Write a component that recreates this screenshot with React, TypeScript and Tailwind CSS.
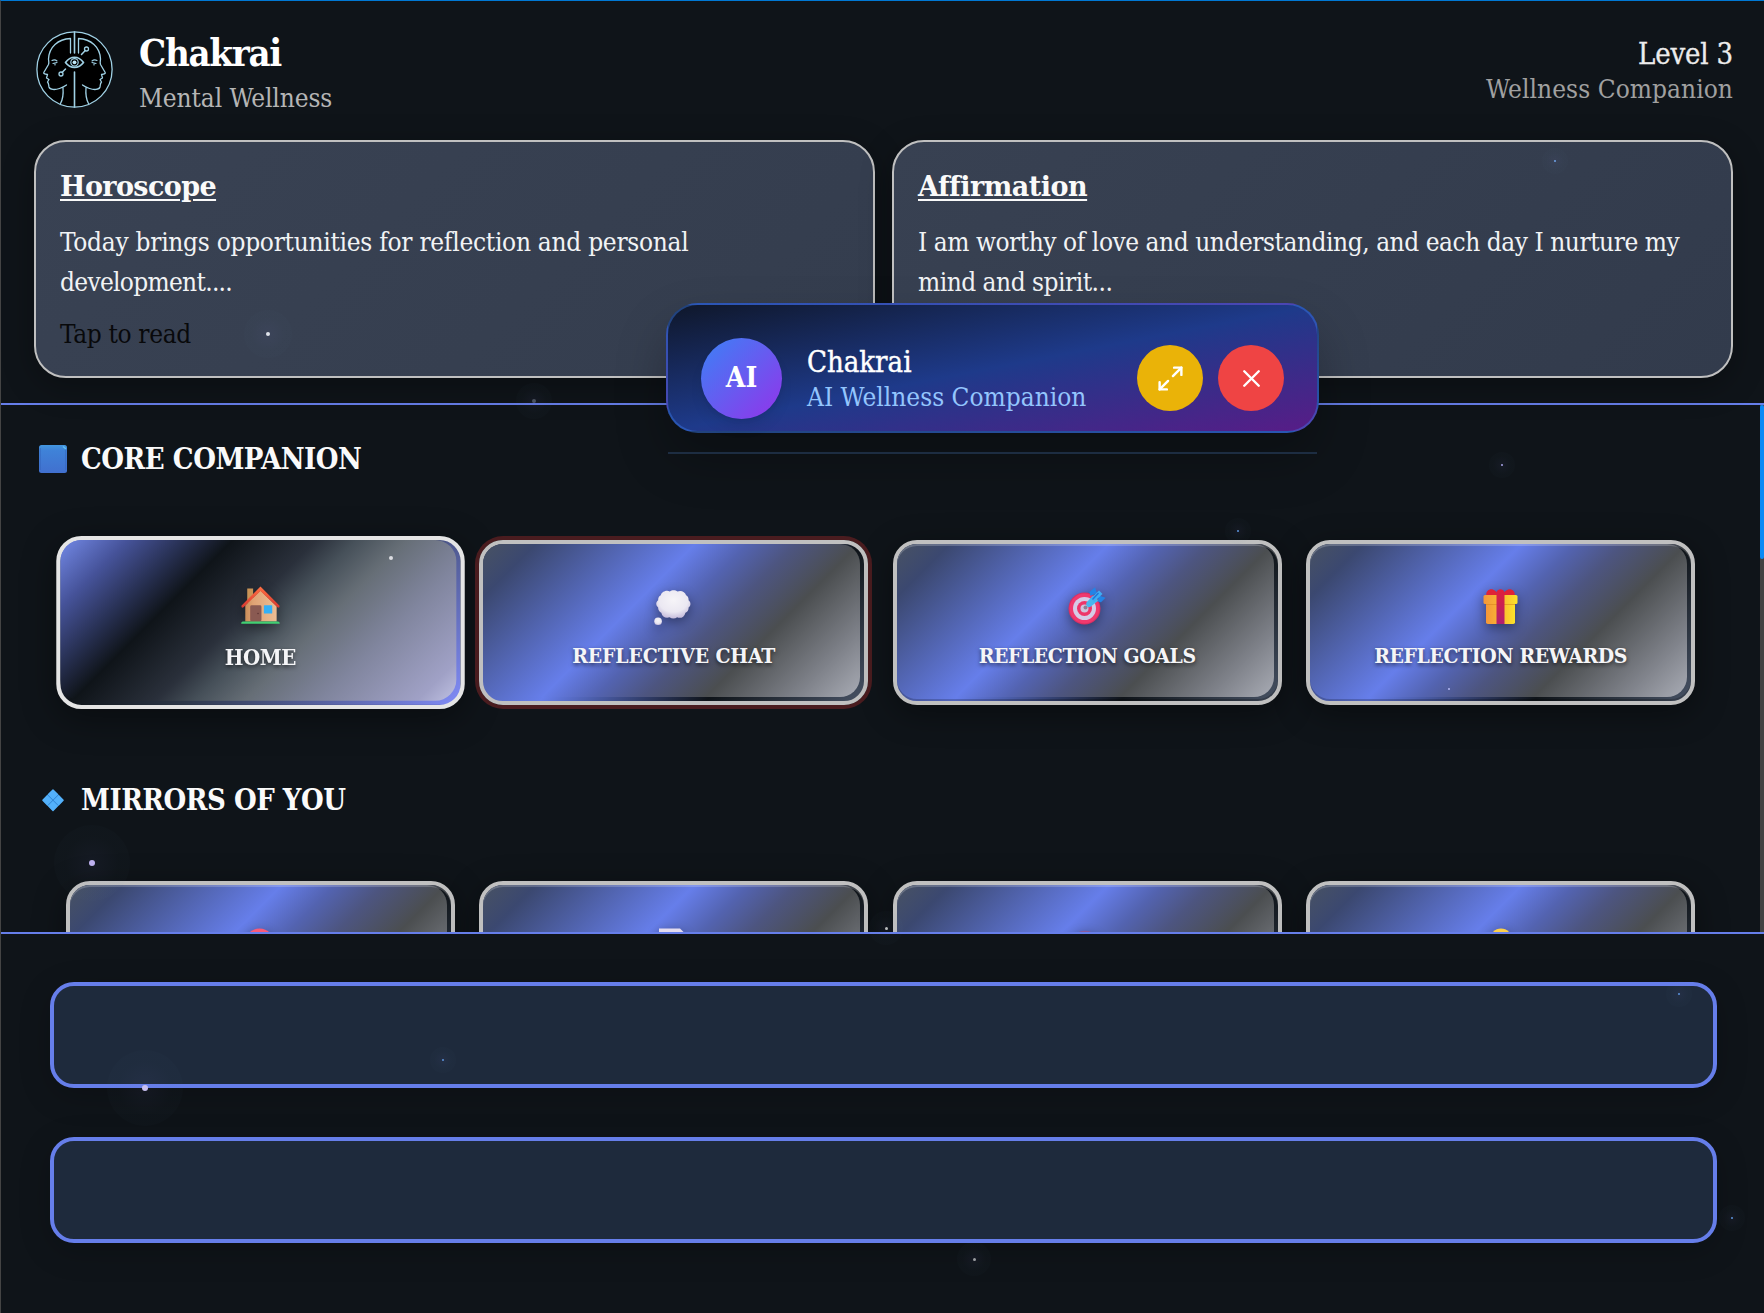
import type { ReactNode } from "react";
import { Maximize2, X } from "lucide-react";

function HeadsLogo() {
  return (
    <svg className="size-[77px] shrink-0" viewBox="0 0 77 77" fill="none" stroke="#9fd0e4" strokeWidth="1.3" strokeLinecap="round" strokeLinejoin="round">
      <circle cx="38.5" cy="38.5" r="37.6" fill="#000" />
      <path d="M38.5 1v21M38.5 41v35" strokeWidth="1.6" />
      <path d="M34.5 22V7.5C22 8 13 16 12.500 28c0 2 .8 3.500 0 5.500L7.800 41.500c-.4 1 .4 1.500 3.700 2l-1 3.500 2.500 1.500-1.500 2.500c1.500 1.500 1 3 1.500 5 1 3 6 3 10.500 1.500 3-1 5-2 7-3.500M27 57c.5 6 .5 10-2.500 15.500" />
      <path d="M42.500 22V7.500C55 8 64 16 64.500 28c0 2-.8 3.500 0 5.500l4.700 8c.4 1-.4 1.500-3.700 2l1 3.500-2.500 1.500 1.500 2.500c-1.500 1.500-1 3-1.500 5-1 3-6 3-10.500 1.500-3-1-5-2-7-3.500M50 57c-.5 6-.5 10 2.500 15.500" />
      <path d="M16 29.500c2-1 3.500-.8 5 .5M17 32.500l4-1M19 32v2M61 29.500c-2-1-3.500-.8-5 .5M60 32.500l-4-1M58 32v2" strokeWidth="1.100" />
      <path d="M29.500 31.500c5-7 13-7 18 0-5 6.500-13 6.500-18 0Z" fill="#000" strokeWidth="1.700" />
      <circle cx="38.500" cy="31.300" r="3.700" strokeWidth="1.200" />
      <circle cx="38.500" cy="31.300" r="1.900" fill="#bfe8f8" stroke="none" />
      <path d="m45.500 23.500 3.800-4M29.500 38l-3.500 3.500" strokeWidth="1.500" />
      <circle cx="50.500" cy="18" r="2" />
      <circle cx="25" cy="43" r="2" />
    </svg>
  );
}

function House() {
  return (
    <svg className="size-[42px]" viewBox="-2 -1.5 45 45">
      <defs>
        <linearGradient id="wall" x1="0" x2="1"><stop offset="0" stopColor="#c98d58" /><stop offset=".25" stopColor="#dfa274" /><stop offset="1" stopColor="#ecbd94" /></linearGradient>
        <linearGradient id="roof" x1="0" x2="0" y1="0" y2="1"><stop offset="0" stopColor="#ff7043" /><stop offset="1" stopColor="#d8372f" /></linearGradient>
      </defs>
      <path d="M7.500 3h6v15h-6z" fill="#c99457" />
      <path d="M5.500 20 21 5l16.500 16v15.500h-32z" fill="url(#wall)" />
      <path d="M1.500 20.500 21 1l19.500 19.500c0 2-1 2.500-2.200 1.500L21 5.500 3.700 22c-1.200 1-2.200.5-2.200-1.500Z" fill="url(#roof)" />
      <rect x="10.500" y="20" width="11.500" height="16.500" rx="1.500" fill="#8a5a52" />
      <circle cx="18.500" cy="28.500" r=".8" fill="#5d3532" />
      <rect x="24.500" y="20" width="8.500" height="8.500" rx=".6" fill="#34b0f7" />
      <path d="M3 36.500h36c1.500.5 2 1.500 1.500 2.500h-39c-.5-1 0-2 1.500-2.500Z" fill="#41cf73" />
    </svg>
  );
}

function Thought() {
  return (
    <svg className="size-[42px]" viewBox="1.600 .5 40.500 40.500">
      <defs>
        <radialGradient id="cloud" cx=".5" cy=".35" r=".65"><stop offset="0" stopColor="#f6f4f8" /><stop offset=".65" stopColor="#ebe8f2" /><stop offset="1" stopColor="#c6bcdc" /></radialGradient>
      </defs>
      <g fill="url(#cloud)">
        <path d="M13 5.500c1.800-.6 3.500-.4 4.800.3 2-1.600 5.400-1.600 7.400 0 3.200-1.500 7.400 0 8.300 3.700 1.800 1 2.600 2.800 2.400 4.800 2.400 1.900 2.400 5 0 6.900.2 2.400-1 4.300-3 5-1 4.300-4.800 6-8 4.500-2 1.500-5.300 1.500-7.300 0-3.700 1.400-7.200-.6-8-4.500-2-.8-3.200-2.800-3-5-2.500-2-2.500-5 0-6.900-.2-2.200.7-4 2.500-4.900.4-2 1.900-3.400 3.900-3.900Z" />
        <circle cx="6.500" cy="34.500" r="3.700" />
      </g>
    </svg>
  );
}

function Target() {
  return (
    <svg className="size-[42px]" viewBox="0 0 42 42">
      <circle cx="18.500" cy="22.500" r="16" fill="#d92f63" />
      <circle cx="18.500" cy="22.500" r="15" fill="#f0396e" />
      <circle cx="18.500" cy="22.500" r="11.500" fill="#d6cbe6" />
      <circle cx="18.500" cy="22.500" r="7.500" fill="#ee3569" />
      <circle cx="18.500" cy="22.500" r="4" fill="#cfc3dd" />
      <circle cx="19.500" cy="21.500" r="2" fill="#8c7f95" />
      <path d="M20.500 16.500 27 9.500l5.500 5-8 6.300c-3 1.500-5.200-1.500-4-4.300Z" fill="#48b6ef" />
      <path d="m24.500 10-1-4L29 1.300l1.800 5.700zM31.500 15.500l3.500.7 4.500-4.500-6.500-2.200z" fill="#2383e6" />
      <path d="M24.500 12.500 33 4.500l3.500 3.500-8.500 8z" fill="#3fadf4" />
      <path d="m26.500 13.500 6-6.500" stroke="#1e74db" strokeWidth="1.400" />
    </svg>
  );
}

function Gift() {
  return (
    <svg className="size-[42px]" viewBox=".5 1 42 42">
      <defs>
        <linearGradient id="box" x1="0" x2="1"><stop offset="0" stopColor="#f5963a" /><stop offset=".5" stopColor="#f8b832" /><stop offset="1" stopColor="#fde32a" /></linearGradient>
        <linearGradient id="ribbon" x1="0" x2="0" y1="0" y2="1"><stop offset="0" stopColor="#e0203a" /><stop offset="1" stopColor="#b02070" /></linearGradient>
      </defs>
      <path d="M7 11c-1.500-5 4-9 9-5l3 3h4l3-3c5-4 10.500 0 9 5Z" fill="#df2237" />
      <rect x="6.500" y="16" width="29" height="23" rx="1.800" fill="url(#box)" />
      <rect x="4" y="10" width="34" height="9" rx="1.500" fill="url(#box)" />
      <path d="M6.500 19h29v1h-29z" fill="#d98720" opacity=".6" />
      <path d="M17 39V8c0-5 8-5 8 0v31Z" fill="url(#ribbon)" />
    </svg>
  );
}

function Brain() {
  return <svg className="size-[42px]" viewBox="0 0 42 42"><ellipse cx="20.500" cy="17" rx="15" ry="15.500" fill="#fb5a78" /></svg>;
}
function Note() {
  return <svg className="size-[42px]" viewBox="0 0 42 42"><path d="M6 1.500h21l4 4v34H6z" fill="#e4dcf0" /></svg>;
}
function Mask() {
  return <svg className="size-[42px]" viewBox="0 0 42 42"><circle cx="19" cy="20" r="16.300" fill="#8a5a98" /></svg>;
}
function Bulb() {
  return <svg className="size-[42px]" viewBox="0 0 42 42"><circle cx="21" cy="12.500" r="11" fill="#fdd04a" /></svg>;
}

function BlueSquare() {
  return (
    <svg className="size-[28px]" viewBox="0 0 28 28">
      <defs><linearGradient id="sq" x1="0" x2="0" y1="0" y2="1"><stop offset="0" stopColor="#4397e0" /><stop offset=".2" stopColor="#3f82d8" /><stop offset="1" stopColor="#4170cf" /></linearGradient></defs>
      <rect width="28" height="28" rx="2.500" fill="url(#sq)" />
      <path d="M1.200 3v22M26.800 3v22" stroke="#315fb5" strokeWidth="1" opacity=".6" />
      <path d="M24 1.500 27 4" stroke="#63c0f2" strokeWidth="1.500" />
    </svg>
  );
}

function BlueDiamonds() {
  return (
    <svg className="size-[28px]" viewBox="0 0 28 28" fill="#53b1fb" stroke="#53b1fb" strokeWidth="1.400" strokeLinejoin="round">
      <path d="m14 3.900 4.600 4.700-4.600 4.700-4.600-4.700zM8.500 9.500l4.600 4.700-4.600 4.700-4.600-4.700zM19.500 9.500l4.600 4.700-4.600 4.700-4.600-4.700zM14 15.100l4.600 4.700-4.600 4.700-4.600-4.700z" />
      <path d="m8.800 9 10.400 10.500M19.200 9 8.800 19.500" stroke="#2f83d2" strokeWidth="1" fill="none" />
    </svg>
  );
}

type Tile = { label: string; spacing: string; icon: ReactNode };

const coreTiles: Tile[] = [
  { label: "REFLECTIVE CHAT", spacing: "tracking-[-0.15px]", icon: <Thought /> },
  { label: "REFLECTION GOALS", spacing: "tracking-[-0.42px]", icon: <Target /> },
  { label: "REFLECTION REWARDS", spacing: "tracking-[-0.38px]", icon: <Gift /> },
];
const mirrorTiles: Tile[] = [
  { label: "", spacing: "", icon: <Brain /> },
  { label: "", spacing: "", icon: <Note /> },
  { label: "", spacing: "", icon: <Mask /> },
  { label: "", spacing: "", icon: <Bulb /> },
];

const labelCls = "relative mt-[13px] text-[21px] leading-[30px] font-bold whitespace-nowrap text-[#f5f5f7] [text-shadow:0_2px_4px_rgba(0,0,0,0.6)]";

function TileButton({ tile, ringed }: { tile: Tile; ringed?: boolean }) {
  return (
    <button
      className={
        "relative flex h-[165px] flex-col items-center rounded-[24px] border-4 border-[#c0c0c0] bg-[linear-gradient(135deg,#2d3748_0%,#667eea_40%,#0f1419_70%,#4a5568_100%)] bg-origin-border pt-[42px] " +
        (ringed ? "shadow-[0_0_0_4px_#4a1c1f]" : "shadow-[0_8px_32px_rgba(0,0,0,0.4)]")
      }
    >
      <span className="absolute top-0 right-1 bottom-1 left-0 rounded-[20px] bg-[linear-gradient(135deg,#485263_0%,#3b4870_10%,#667eea_40%,#5363b0_50%,#4d5580_59%,#4b4e50_71%,#80838b_88%,#a9acb5_100%)]" />
      {!ringed && <span className="absolute inset-0 rounded-[20px] shadow-[inset_0_2px_0_rgba(255,255,255,0.2),inset_0_-2px_0_rgba(0,0,0,0.2)]" />}
      <span className="relative h-[42px]">
        <span className="block drop-shadow-[0_4px_6px_rgba(0,0,0,0.4)]">{tile.icon}</span>
      </span>
      <span className={labelCls + " " + tile.spacing}>{tile.label}</span>
    </button>
  );
}

function HomeButton() {
  return (
    <button className="relative flex h-[165px] scale-105 flex-col items-center rounded-[24px] border-4 border-[#e5e5e5] bg-[linear-gradient(135deg,#667eea_0%,#0f1419_30%,#2d3748_50%,#818cf8_100%)] pt-[42px] shadow-[0_8px_32px_rgba(0,0,0,0.4)]">
      <span className="absolute top-0 right-1 bottom-1 left-0 rounded-[20px] bg-[linear-gradient(135deg,#7389e6_0%,#46539a_12%,#0f1419_31%,#2a303b_46%,#465059_53%,#666e76_62%,#7f849c_75%,#a0a1c6_93%,#bfc1e2_100%)]" />
      <span className="relative h-[42px] drop-shadow-[0_4px_6px_rgba(0,0,0,0.4)]"><House /></span>
      <span className={labelCls + " tracking-[-0.5px]"}>HOME</span>
    </button>
  );
}

const stars = [
  { x: 268, y: 334, d: 4, h: 48, c: "#dfe3ea" },
  { x: 1555, y: 161, d: 2, h: 26, c: "#6fa5e8" },
  { x: 534, y: 401, d: 4, h: 36, c: "#4a5260" },
  { x: 1502, y: 465, d: 2, h: 26, c: "#a9a5e8" },
  { x: 1238, y: 531, d: 2, h: 26, c: "#5b95dc" },
  { x: 391, y: 558, d: 4, h: 0, c: "#dcdde2" },
  { x: 1449, y: 689, d: 2, h: 0, c: "#b4b8f5" },
  { x: 92, y: 863, d: 6, h: 76, c: "#bdb0ee" },
  { x: 886, y: 928, d: 3, h: 34, c: "#b9bcbe" },
  { x: 145, y: 1088, d: 6, h: 76, c: "#c9c0f0" },
  { x: 443, y: 1060, d: 2, h: 26, c: "#5b95dc" },
  { x: 1679, y: 994, d: 2, h: 26, c: "#5b95dc" },
  { x: 1732, y: 1218, d: 2, h: 26, c: "#5b95dc" },
  { x: 974, y: 1259, d: 3, h: 34, c: "#9a9da0" },
];

const cardTitle = "pt-px text-[27px] leading-[39px] font-bold text-[#fafafa] underline decoration-2 underline-offset-[3px] font-['DejaVu_Serif',serif] font-stretch-normal";

export default function App() {
  return (
    <div className="relative flex h-[1313px] w-[1764px] flex-col overflow-hidden border-t border-l border-t-[#0078d4] border-l-[#444] bg-[#0f1419] font-['DejaVu_Serif_Condensed','DejaVu_Serif',serif] font-stretch-condensed">
      <header className="h-[404px] shrink-0 border-b-2 border-[#667eea] pr-[31px] pl-[33px]">
        <div className="flex h-[139px] justify-between">
          <div className="flex pt-[28px]">
            <div className="pt-[2px] pl-[2px]"><HeadsLogo /></div>
            <div className="pl-[26px]">
              <h1 className="text-[38px] leading-[48px] font-bold tracking-[-1.3px] text-white">Chakrai</h1>
              <p className="mt-[3px] text-[26px] leading-[36px] tracking-[-0.1px] text-[#b5b5b5]">Mental Wellness</p>
            </div>
          </div>
          <div className="pt-[36px] text-right">
            <p className="text-[29px] leading-[35px] tracking-[-0.17px] text-[#ececec] [-webkit-text-stroke:0.3px]">Level 3</p>
            <p className="text-[26px] leading-[35px] tracking-[0.06px] text-[#a0a0a0]">Wellness Companion</p>
          </div>
        </div>
        <div className="grid h-[238px] grid-cols-2 gap-[17px] text-[26px] leading-[40px] text-[#f1f3f5]">
          <section className="rounded-[32px] border-2 border-[#c0c0c0] bg-[linear-gradient(135deg,#394253,#343d4e)] px-6 pt-6 shadow-[0_8px_32px_rgba(0,0,0,0.3)]">
            <h2 className={cardTitle}><span className="tracking-[-0.6px]">Horoscope</span></h2>
            <p className="mt-4 whitespace-nowrap"><span className="tracking-[-0.28px]">Today brings opportunities for reflection and personal</span><br /><span className="tracking-[-0.7px]">development....</span></p>
            <p className="mt-3 tracking-[-0.35px] text-[#08090b]">Tap to read</p>
          </section>
          <section className="rounded-[32px] border-2 border-[#c0c0c0] bg-[linear-gradient(135deg,#384152,#323b4c)] px-6 pt-6 shadow-[0_8px_32px_rgba(0,0,0,0.3)]">
            <h2 className={cardTitle}><span className="tracking-[-0.5px]">Affirmation</span></h2>
            <p className="mt-4 whitespace-nowrap"><span className="tracking-[-0.46px]">I am worthy of love and understanding, and each day I nurture my</span><br /><span className="tracking-[-0.5px]">mind and spirit...</span></p>
          </section>
        </div>
      </header>

      <main className="flex h-[527px] shrink-0 overflow-hidden">
        <div className="flex-1 pl-[38px]">
          <div className="flex h-[72px] items-end gap-[14px]">
            <div className="pb-1"><BlueSquare /></div>
            <h3 className="text-[29px] leading-[36px] font-bold tracking-[-0.46px] text-[#fafafa]">CORE COMPANION</h3>
          </div>
          <div className="mt-[63px] ml-[27px] grid w-[1629px] grid-cols-4 gap-[24.700px]">
            <HomeButton />
            <TileButton tile={coreTiles[0]} ringed />
            <TileButton tile={coreTiles[1]} />
            <TileButton tile={coreTiles[2]} />
          </div>
          <div className="mt-[77px] flex h-[36px] items-end gap-[14px]">
            <div className="pb-1"><BlueDiamonds /></div>
            <h3 className="text-[29px] leading-[36px] font-bold tracking-[-0.48px] text-[#fafafa]">MIRRORS OF YOU</h3>
          </div>
          <div className="mt-[63px] ml-[27px] grid w-[1629px] grid-cols-4 gap-[24.700px]">
            {mirrorTiles.map((t, i) => <TileButton key={i} tile={t} />)}
          </div>
        </div>
        <div className="h-full w-1 bg-[#424242]"><div className="h-[154px] rounded-[2px] bg-[#0a8af5]" /></div>
      </main>

      <footer className="flex flex-1 flex-col gap-[49px] border-t-2 border-[#667eea] bg-[#0f1419] pt-12 pr-[47px] pl-[49px]">
        <div className="h-[106px] rounded-[24px] border-4 border-[#667eea] bg-[#1e2a3c] shadow-[0_8px_32px_rgba(0,0,0,0.2)]" />
        <div className="h-[106px] rounded-[24px] border-4 border-[#667eea] bg-[#1e2a3c] shadow-[0_8px_32px_rgba(0,0,0,0.2)]" />
      </footer>

      <div className="absolute top-[302px] left-[665px] w-[653px]">
        <div className="flex h-[130px] items-center rounded-[32px] border-2 border-[#3b82f6]/40 bg-[linear-gradient(to_bottom_right,#0f172a,#1e3a8a,#581c87)] pt-[20px] pr-[33px] pl-[33px] shadow-[0_25px_50px_rgba(0,0,0,0.25)]">
          <div className="flex size-[81px] items-center justify-center rounded-full bg-[linear-gradient(135deg,#3b82f6,#9333ea)] text-[28px] font-bold text-white shadow-lg">AI</div>
          <div className="ml-[25px] flex-1 pt-[2px]">
            <p className="text-[29px] leading-[36px] text-white [-webkit-text-stroke:0.4px]">Chakrai</p>
            <p className="text-[26px] leading-[34px] text-[#93c5fd]">AI Wellness Companion</p>
          </div>
          <div className="flex gap-[15px]">
            <div className="flex size-[66px] items-center justify-center rounded-full bg-[#eab308] text-white"><Maximize2 size={29} strokeWidth={2} /></div>
            <div className="flex size-[66px] items-center justify-center rounded-full bg-[#ef4444] text-white"><X size={29} strokeWidth={2} /></div>
          </div>
        </div>
        <div className="mx-[2px] mt-[19px] h-[2px] bg-[#1d2d42]" />
      </div>

      {stars.map((s, i) => (
        <span key={i} className="absolute flex size-0 items-center justify-center" style={{ left: s.x - 1, top: s.y - 1 }}>
          <span className="absolute shrink-0 rounded-full bg-[radial-gradient(circle,rgba(130,130,220,0.06),rgba(90,130,160,0.025)_50%,rgba(90,130,160,0.02))]" style={{ width: s.h, height: s.h }} />
          <span className="absolute shrink-0 rounded-full" style={{ width: s.d, height: s.d, background: s.c }} />
        </span>
      ))}
    </div>
  );
}
